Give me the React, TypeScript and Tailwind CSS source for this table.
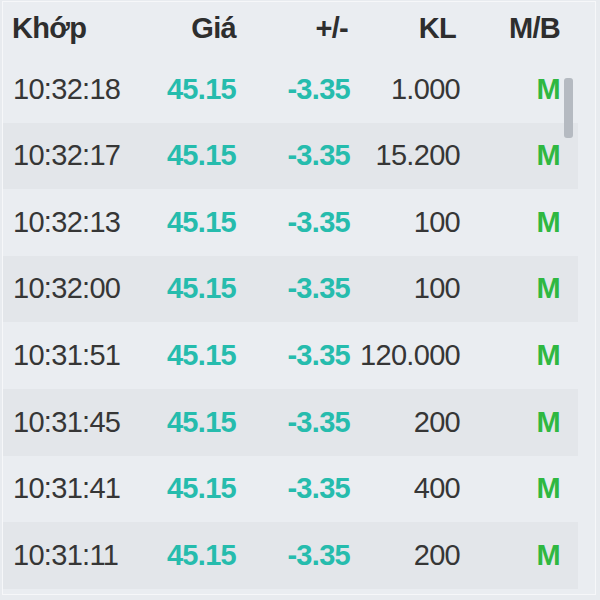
import React from "react"

type Trade = { time: string; price: string; change: string; vol: string; side: string }

const trades: Trade[] = [
  { time: "10:32:18", price: "45.15", change: "-3.35", vol: "1.000", side: "M" },
  { time: "10:32:17", price: "45.15", change: "-3.35", vol: "15.200", side: "M" },
  { time: "10:32:13", price: "45.15", change: "-3.35", vol: "100", side: "M" },
  { time: "10:32:00", price: "45.15", change: "-3.35", vol: "100", side: "M" },
  { time: "10:31:51", price: "45.15", change: "-3.35", vol: "120.000", side: "M" },
  { time: "10:31:45", price: "45.15", change: "-3.35", vol: "200", side: "M" },
  { time: "10:31:41", price: "45.15", change: "-3.35", vol: "400", side: "M" },
  { time: "10:31:11", price: "45.15", change: "-3.35", vol: "200", side: "M" },
]

const cols = "grid grid-cols-[127px_106px_114px_110px_100px] items-center"

export default function App() {
  return (
    <div className="w-[600px] h-[600px] bg-[#e8ebef] pl-[2px] pt-[1px] pr-[4px] pb-[5px] font-['Liberation_Sans',Arial,sans-serif] text-[29px] tracking-[-0.7px] text-[#363636]">
      <div className="relative h-full border border-[#f6f7f9] bg-[#eaedf1] overflow-hidden">
        {/* header */}
        <div className={`${cols} h-[54px] font-bold text-[#2e2e2e]`}>
          <div className="pl-[9px]">Khớp</div>
          <div className="text-right">Giá</div>
          <div className="text-right pr-[2px]">+/-</div>
          <div className="text-right pr-[4px]">KL</div>
          <div className="text-right">M/B</div>
        </div>

        {/* rows */}
        <div className="w-[575px]">
          {trades.map((t, i) => (
            <div key={i} className={`${cols} h-[66.6px] ${i % 2 === 1 ? "bg-[#e3e6ea]" : "bg-[#eaedf1]"}`}>
              <div className="pl-[10px]">{t.time}</div>
              <div className="text-right font-bold text-[#26bcad]">{t.price}</div>
              <div className="text-right font-bold text-[#26bcad]">{t.change}</div>
              <div className="text-right">{t.vol}</div>
              <div className="text-right font-bold text-[#2fb841]">{t.side}</div>
            </div>
          ))}
        </div>

        {/* scrollbar thumb */}
        <div className="absolute left-[561px] top-[76px] w-[9px] h-[60px] rounded-[3px] bg-[#b5bac1]" />
      </div>
    </div>
  )
}
